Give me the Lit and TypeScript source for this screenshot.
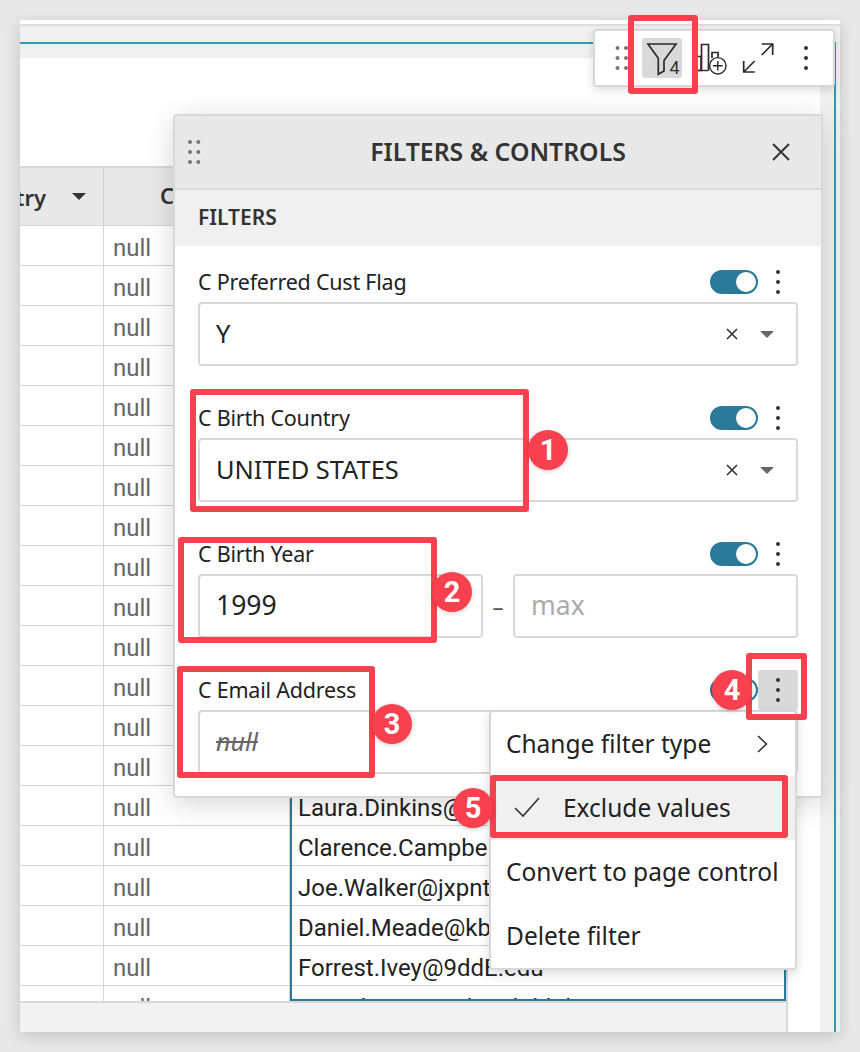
import { LitElement, css, html, svg } from 'lit';
import { customElement } from 'lit/decorators.js';

const emails: Record<number, string> = {
	14: 'Laura.Dinkins@GbQ.org',
	15: 'Clarence.Campbell@x.com',
	16: 'Joe.Walker@jxpntk.com',
	17: 'Daniel.Meade@kbr.edu',
	18: 'Forrest.Ivey@9ddE.edu',
	19: 'Timothy.Dean@kc3dShb.biz',
};

const marks = [
	{ n: '1', box: [190, 389, 339, 123], dot: [548, 450] },
	{ n: '2', box: [178, 537, 259, 106], dot: [452, 592] },
	{ n: '3', box: [177, 666, 198, 112], dot: [392, 724] },
	{ n: '4', box: [746, 653, 61, 67], dot: [732, 690] },
	{ n: '5', box: [490, 775, 298, 63], dot: [473, 808] },
];

const dots = (xs: number[], ys: number[], r: number) =>
	xs.flatMap((x) => ys.map((y) => svg`<circle cx=${x} cy=${y} r=${r}></circle>`));

const kebab = html`<svg class="kebab" width="6" height="26" viewBox="0 0 6 26">${dots([3], [3, 13, 23], 2)}</svg>`;
const cross = html`<svg class="x" width="12" height="12" viewBox="0 0 12 12"><path d="M1 1l10 10M11 1L1 11"></path></svg>`;
const caret = html`<svg class="caret" width="14" height="7" viewBox="0 0 14 7"><path d="M0 0h14L7 7z"></path></svg>`;

@customElement('app-root')
export class AppRoot extends LitElement {
	static styles = css`
    :host {
      display: block;
      position: relative;
      width: 860px;
      height: 1052px;
      box-sizing: border-box;
      padding: 20px;
      background: #e8e8e8;
      overflow: hidden;
      font-family: "Noto Sans", sans-serif;
      color: #222;
    }

    .window {
      height: 100%;
      display: flex;
      flex-direction: column;
      background: #f0f0f0;
      box-shadow: 0 4px 14px rgba(0, 0, 0, 0.16);
    }

    .top-white { height: 4px; background: #fff; flex: none; }
    .top-strip { height: 16px; border-top: 2px solid #ddd; flex: none; }

    .frame {
      flex: 1;
      min-height: 0;
      margin-right: 4px;
      display: flex;
      flex-direction: column;
      border-top: 2px solid #3595bd;
      border-right: 2px solid #3595bd;
    }

    .ledge { height: 14px; flex: none; }

    .sheet {
      flex: 1;
      min-height: 0;
      width: 800px;
      background: #fff;
      display: flex;
      flex-direction: column;
    }

    .blank { height: 108px; flex: none; }

    .table {
      width: 768px;
      flex: 1;
      min-height: 0;
      box-sizing: border-box;
      display: flex;
      flex-direction: column;
      border-right: 2px solid #d8d8d8;
    }

    .grid {
      position: relative;
      flex: none;
      height: 837px;
      overflow: hidden;
      border-top: 2px solid #d8d8d8;
      border-bottom: 2px solid #d8d8d8;
      box-sizing: border-box;
    }

    .row {
      display: grid;
      grid-template-columns: 84px 186px 1fr;
      height: 40px;
      box-sizing: border-box;
      border-bottom: 1px solid #d4d4d4;
      font-family: Roboto, sans-serif;
      font-size: 24px;
      line-height: 44px;
    }

    .row.head {
      height: 58px;
      line-height: 54px;
      background: #e8e8e8;
      font-family: "Noto Sans", sans-serif;
      font-size: 22px;
      font-weight: 600;
      color: #333;
    }

    .cell {
      border-right: 1px solid #d4d4d4;
      overflow: hidden;
      white-space: nowrap;
    }

    .cell.col {
      display: flex;
      justify-content: flex-end;
      align-items: center;
      gap: 26px;
      padding-right: 17px;
    }

    .cell.col > * { flex: none; }
    .cell.c { padding-left: 56px; }
    .cell.null { padding-left: 9px; color: #666; }
    .cell.mail { padding-left: 8px; color: #222; border-right: 0; }

    .caret path { fill: #666; }
    .col .caret path { fill: #333; }

    .selection {
      position: absolute;
      left: 270px;
      right: 0;
      top: 58px;
      bottom: 0;
      border: 2px solid #2a7a9e;
      border-top: 0;
      pointer-events: none;
    }

    .foot { flex: 1; background: #f2f2f2; }

    .toolbar {
      position: absolute;
      left: 593px;
      top: 29px;
      width: 242px;
      height: 58px;
      box-sizing: border-box;
      background: #fff;
      border: 2px solid #d8d8d8;
      border-radius: 4px;
      box-shadow: 0 3px 10px rgba(0, 0, 0, 0.14);
    }

    .toolbar svg.tools { display: block; }
    .toolbar .active { fill: #d9d9d9; }
    .line { fill: none; stroke: #2a2a2a; stroke-width: 1.7; }
    .fine { fill: none; stroke: #2a2a2a; stroke-width: 1.4; }
    .grip { fill: #777; }
    .ink { fill: #333; }
    .badge { font-family: Roboto, sans-serif; font-size: 18px; fill: #333; }

    .panel {
      position: absolute;
      left: 173px;
      top: 114px;
      width: 650px;
      height: 684px;
      box-sizing: border-box;
      background: #fff;
      border: 2px solid #d8d8d8;
      border-radius: 4px;
      box-shadow: 0 6px 28px rgba(0, 0, 0, 0.16);
      display: flex;
      flex-direction: column;
    }

    .panel-head {
      position: relative;
      height: 74px;
      box-sizing: border-box;
      flex: none;
      padding-bottom: 2px;
      background: #e8e8e8;
      border-bottom: 2px solid #d8d8d8;
      display: flex;
      align-items: center;
      justify-content: center;
      font-size: 24.8px;
      font-weight: 600;
      color: #333;
    }

    .panel-grip { position: absolute; left: 12px; top: 23px; }
    .panel-close { position: absolute; right: 31px; top: 27px; }
    .panel-close path { fill: none; stroke: #333; stroke-width: 2; }

    .section {
      height: 56px;
      box-sizing: border-box;
      flex: none;
      background: #f0f0f0;
      padding-left: 23px;
      font-size: 21px;
      font-weight: 600;
      line-height: 55px;
      color: #333;
    }

    .fields {
      padding: 16px 23px 0;
      display: flex;
      flex-direction: column;
      gap: 32px;
    }

    .field-top {
      display: flex;
      align-items: center;
      height: 40px;
      font-size: 21.5px;
    }

    .field-top .name { flex: 1; letter-spacing: -0.22px; padding-bottom: 2px; }

    .toggle {
      width: 48px;
      height: 24px;
      box-sizing: border-box;
      border-radius: 12px;
      border: 2px solid #2b7899;
      background: #2b7899;
      display: flex;
      justify-content: flex-end;
    }

    .toggle::after {
      content: '';
      width: 20px;
      height: 20px;
      border-radius: 50%;
      background: #fff;
    }

    .more {
      width: 40px;
      height: 40px;
      display: flex;
      align-items: center;
      justify-content: center;
      border-radius: 3px;
    }

    .more.on { background: #d9d9d9; }
    .kebab { fill: #333; }

    .input {
      height: 64px;
      flex: 1;
      box-sizing: border-box;
      display: flex;
      align-items: center;
      border: 2px solid #d8d8d8;
      border-radius: 4px;
      padding: 0 22px 2px 16px;
      font-size: 25.4px;
      color: #222;
    }

    .input .value { flex: 1; }
    .input .x { margin-right: 22px; margin-top: 2px; }
    .input .caret { margin-top: 2px; }
    .x path { fill: none; stroke: #333; stroke-width: 1.6; }
    .range { display: flex; align-items: center; }
    .range .input { font-size: 26.5px; }
    .dash { width: 30px; text-align: center; font-size: 22px; color: #555; }
    .hint { color: #aaa; }
    .struck { font-style: italic; text-decoration: line-through; color: #666; font-size: 25px; }

    .menu {
      position: absolute;
      left: 489px;
      top: 711px;
      width: 308px;
      box-sizing: border-box;
      background: #fff;
      border: 2px solid #d8d8d8;
      border-top-width: 1px;
      border-radius: 4px;
      box-shadow: 0 4px 12px rgba(0, 0, 0, 0.14);
    }

    .item {
      height: 64px;
      box-sizing: border-box;
      display: flex;
      align-items: center;
      justify-content: space-between;
      padding: 0 15px 2px;
      font-size: 24.5px;
      color: #222;
      white-space: nowrap;
    }

    .item.on { background: #f0f0f0; justify-content: flex-start; gap: 23px; padding-left: 23px; }
    .item path { fill: none; stroke: #333; stroke-width: 1.6; }
    .item .chev { margin-right: 12px; margin-top: 2px; }

    .box {
      position: absolute;
      box-sizing: border-box;
      border: 6px solid #f9404e;
      border-radius: 3px;
    }

    .dot {
      position: absolute;
      width: 40px;
      height: 40px;
      margin: -20px 0 0 -20px;
      border-radius: 50%;
      background: #f9404e;
      color: #fff;
      box-shadow: 0 1px 5px rgba(0, 0, 0, 0.2);
      display: flex;
      align-items: center;
      justify-content: center;
      font-family: Roboto, sans-serif;
      font-size: 29px;
      font-weight: 700;
    }

    .box.tool { left: 628px; top: 15px; width: 70px; height: 79px; }
  `;

	private field(name: string, value: unknown, on = true) {
		return html`
      <div class="field">
        <div class="field-top">
          <span class="name">${name}</span>
          <span class="toggle"></span>
          <span class="more ${on ? '' : 'on'}">${kebab}</span>
        </div>
        ${value}
      </div>
    `;
	}

	private select(value: string) {
		return html`<div class="input"><span class="value">${value}</span>${cross}${caret}</div>`;
	}

	private rows() {
		const out = [];
		for (let i = 0; i < 20; i++) {
			out.push(html`
        <div class="row">
          <div class="cell"></div>
          <div class="cell null">null</div>
          <div class="cell mail">${emails[i] ?? ''}</div>
        </div>
      `);
		}
		return out;
	}

	render() {
		return html`
      <div class="window">
        <div class="top-white"></div>
        <div class="top-strip"></div>
        <div class="frame">
          <div class="ledge"></div>
          <div class="sheet">
            <div class="blank"></div>
            <div class="table">
              <div class="grid">
                <div class="row head">
                  <div class="cell col"><span>C Birth Country</span>${caret}</div>
                  <div class="cell c">C Email Preferred</div>
                  <div class="cell"></div>
                </div>
                ${this.rows()}
                <div class="selection"></div>
              </div>
              <div class="foot"></div>
            </div>
          </div>
        </div>
      </div>

      <div class="toolbar">
        <svg class="tools" width="238" height="54" viewBox="595 31 238 54">
          <g class="grip">${dots([617.5, 626], [48, 58, 68], 2)}</g>
          <rect class="active" x="642" y="38" width="40" height="40" rx="3"></rect>
          <path class="line" d="M648 44h28l-12 16.5v10.5l-5.700 3.200v-16z"></path>
          <text class="badge" x="669.500" y="73.500">4</text>
          <path class="line" d="M697.500 56.500h3.500v14h-3.500M701.500 70.500v-26h7v26M712 58v-5.500h6V57"></path>
          <path class="fine" d="M697.500 70.500h11"></path>
          <circle class="fine" cx="717.800" cy="65.800" r="8.200"></circle>
          <path class="fine" d="M717.800 61v9.600M713 65.800h9.600"></path>
          <path class="line" d="M761.700 55l11-11M761.700 44h11v11M754.700 61l-11 11M743.700 61v11h11"></path>
          <g class="ink">${dots([806], [48, 58, 68], 2)}</g>
        </svg>
      </div>

      <div class="panel">
        <div class="panel-head">
          <svg class="panel-grip grip" width="16" height="28" viewBox="0 0 16 28">${dots([3, 11.300], [3, 13, 23], 2)}</svg>
          <span>FILTERS &amp; CONTROLS</span>
          <svg class="panel-close" width="18" height="18" viewBox="0 0 18 18"><path d="M1 1l16 16M17 1L1 17"></path></svg>
        </div>
        <div class="section">FILTERS</div>
        <div class="fields">
          ${this.field('C Preferred Cust Flag', this.select('Y'))}
          ${this.field('C Birth Country', this.select('UNITED STATES'))}
          ${this.field('C Birth Year', html`
            <div class="range">
              <div class="input">1999</div>
              <span class="dash">–</span>
              <div class="input"><span class="hint">max</span></div>
            </div>
          `)}
          ${this.field('C Email Address', html`<div class="input"><span class="struck">null</span></div>`, false)}
        </div>
      </div>

      <div class="menu">
        <div class="item">
          <span>Change filter type</span>
          <svg class="chev" width="11" height="18" viewBox="0 0 11 18"><path d="M1 1l8.500 8-8.500 8"></path></svg>
        </div>
        <div class="item on">
          <svg width="26" height="22" viewBox="0 0 26 22"><path d="M1 12l8 8L25 2"></path></svg>
          <span>Exclude values</span>
        </div>
        <div class="item">Convert to page control</div>
        <div class="item">Delete filter</div>
      </div>

      <div class="box tool"></div>
      ${marks.map(
			(m) => html`
          <div class="box" style="left:${m.box[0]}px;top:${m.box[1]}px;width:${m.box[2]}px;height:${m.box[3]}px"></div>
          <div class="dot" style="left:${m.dot[0]}px;top:${m.dot[1]}px">${m.n}</div>
        `
		)}
    `;
	}
}
